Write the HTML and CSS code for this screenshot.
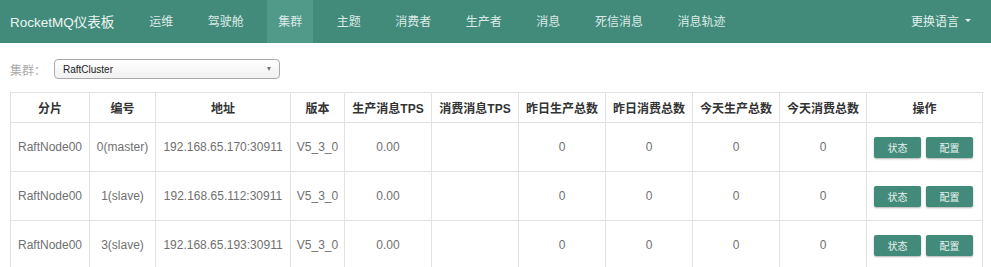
FILE: index.html
```html
<!DOCTYPE html>
<html lang="zh-CN">
<head>
<meta charset="utf-8">
<title>RocketMQ仪表板</title>
<link rel="stylesheet" href="styles.css">
</head>
<body>
<header class="navbar">
  <span class="brand">RocketMQ仪表板</span>
  <ul class="nav">
    <li class="nav-item">运维</li>
    <li class="nav-item">驾驶舱</li>
    <li class="nav-item active">集群</li>
    <li class="nav-item">主题</li>
    <li class="nav-item">消费者</li>
    <li class="nav-item">生产者</li>
    <li class="nav-item">消息</li>
    <li class="nav-item">死信消息</li>
    <li class="nav-item">消息轨迹</li>
  </ul>
  <div class="lang">更换语言<span class="caret"></span></div>
</header>

<main class="content">
  <div class="filter">
    <span class="filter-label">集群：</span>
    <div class="select">
      <span class="select-value">RaftCluster</span>
      <span class="select-arrow"></span>
    </div>
  </div>

  <table class="grid">
    <colgroup>
      <col class="c-shard">
      <col class="c-id">
      <col class="c-addr">
      <col class="c-ver">
      <col class="c-num">
      <col class="c-num">
      <col class="c-num">
      <col class="c-num">
      <col class="c-num">
      <col class="c-num">
      <col class="c-op">
    </colgroup>
    <thead>
      <tr>
        <th>分片</th><th>编号</th><th>地址</th><th>版本</th><th>生产消息TPS</th><th>消费消息TPS</th><th>昨日生产总数</th><th>昨日消费总数</th><th>今天生产总数</th><th>今天消费总数</th><th>操作</th>
      </tr>
    </thead>
    <tbody>
      <tr>
        <td>RaftNode00</td><td>0(master)</td><td>192.168.65.170:30911</td><td>V5_3_0</td><td>0.00</td><td></td><td>0</td><td>0</td><td>0</td><td>0</td>
        <td><div class="ops"><button class="btn">状态</button><button class="btn">配置</button></div></td>
      </tr>
      <tr>
        <td>RaftNode00</td><td>1(slave)</td><td>192.168.65.112:30911</td><td>V5_3_0</td><td>0.00</td><td></td><td>0</td><td>0</td><td>0</td><td>0</td>
        <td><div class="ops"><button class="btn">状态</button><button class="btn">配置</button></div></td>
      </tr>
      <tr>
        <td>RaftNode00</td><td>3(slave)</td><td>192.168.65.193:30911</td><td>V5_3_0</td><td>0.00</td><td></td><td>0</td><td>0</td><td>0</td><td>0</td>
        <td><div class="ops"><button class="btn">状态</button><button class="btn">配置</button></div></td>
      </tr>
    </tbody>
  </table>
</main>
</body>
</html>
```

FILE: styles.css
```css
* { box-sizing: border-box; }

html, body {
  margin: 0;
  padding: 0;
  background: #fff;
  font-family: "Liberation Sans", "Noto Sans CJK SC", sans-serif;
  overflow: hidden;
}

.navbar {
  display: flex;
  align-items: stretch;
  height: 43px;
  background: #428b7a;
  padding-left: 10px;
  color: #e4f0ec;
}

.brand {
  display: flex;
  align-items: center;
  font-size: 13.5px;
  color: #eef5f3;
  margin-right: 24px;
  padding-bottom: 2px;
}

.nav {
  display: flex;
  list-style: none;
  margin: 0;
  padding: 0;
  gap: 12.5px;
}

.nav-item {
  display: flex;
  align-items: center;
  padding: 0 11px 2px;
  font-size: 12px;
  color: #dbeae6;
}

.nav-item.active {
  background: #519a8a;
}

.lang {
  margin-left: auto;
  display: flex;
  align-items: center;
  padding: 0 20px 2px 0;
  font-size: 12px;
  color: #e4f0ec;
}

.caret {
  display: inline-block;
  width: 0;
  height: 0;
  margin-left: 6px;
  border-left: 3px solid transparent;
  border-right: 3px solid transparent;
  border-top: 3px solid #e4f0ec;
}

.content {
  padding: 16px 10px 0;
}

.filter {
  display: flex;
  align-items: center;
  height: 20px;
}

.filter-label {
  font-size: 12px;
  color: #aaa;
  width: 44px;
}

.select {
  display: flex;
  align-items: center;
  justify-content: space-between;
  width: 226px;
  height: 20px;
  padding: 0 8px 0 8px;
  border: 1px solid #aaa;
  border-radius: 4px;
  background: linear-gradient(#ffffff, #f0f0f0);
}

.select-value {
  font-size: 10px;
  color: #222;
}

.select-arrow {
  width: 0;
  height: 0;
  border-left: 2.5px solid transparent;
  border-right: 2.5px solid transparent;
  border-top: 4px solid #777;
}

.grid {
  margin-top: 13px;
  width: 972px;
  table-layout: fixed;
  border-collapse: collapse;
  font-size: 12px;
}

.c-shard { width: 79px; }
.c-id { width: 66px; }
.c-addr { width: 135px; }
.c-ver { width: 54px; }
.c-num { width: 87px; }
.c-op { width: 116px; }

.grid th,
.grid td {
  border: 1px solid #e2e2e2;
  text-align: center;
  vertical-align: middle;
  padding: 0;
  white-space: nowrap;
}

.grid th {
  height: 30px;
  color: #333;
  font-weight: bold;
}

.grid td {
  height: 49px;
  color: #707070;
}

.ops {
  display: flex;
  justify-content: center;
  gap: 5px;
  padding-right: 2px;
}

.btn {
  width: 47px;
  height: 21px;
  padding: 0;
  border: none;
  border-radius: 2px;
  background: #428b7a;
  color: #e8f2ef;
  font-family: "Liberation Sans", "Noto Sans CJK SC", sans-serif;
  font-size: 10px;
  box-shadow: 0 1px 2px rgba(0, 0, 0, 0.3);
}
```
